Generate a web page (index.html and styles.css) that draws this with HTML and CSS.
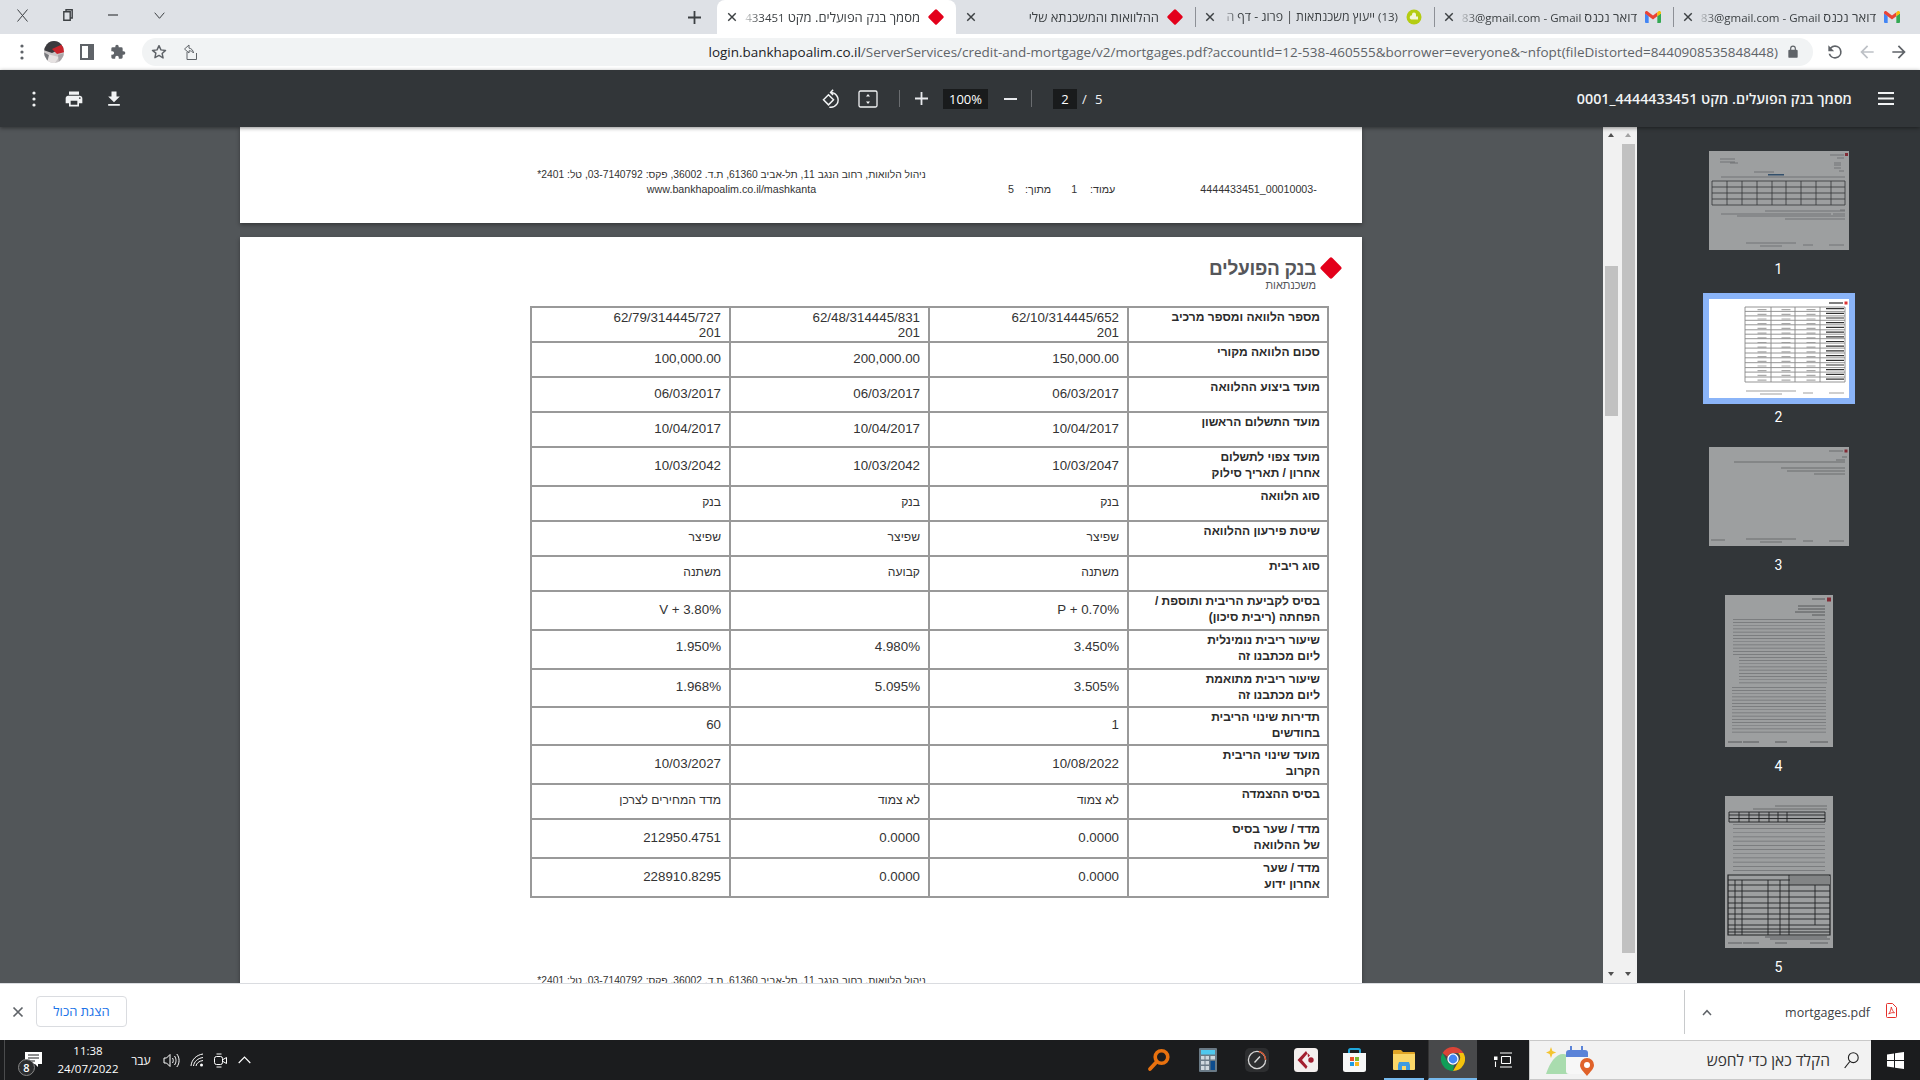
FILE: index.html
```html
<!DOCTYPE html>
<html lang="he">
<head>
<meta charset="utf-8">
<title>mortgages.pdf</title>
<link rel="stylesheet" href="styles.css">
</head>
<body>
<svg class="defs" width="0" height="0">
  <symbol id="diamond" viewBox="0 0 22 22"><path d="M9.600 1 1 9.700a1.900 1.900 0 0 0 0 2.600L9.600 21a1.900 1.900 0 0 0 2.800 0l8.600-8.700a1.900 1.900 0 0 0 0-2.600L12.400 1a1.900 1.900 0 0 0-2.800 0z" fill="#e3001b"/></symbol>
  <symbol id="gmail" viewBox="0 0 24 18">
    <path fill="#4285f4" d="M0 3.500V16.500A1.500 1.500 0 0 0 1.500 18H5.500V7.500Z"/>
    <path fill="#34a853" d="M24 3.500V16.500A1.500 1.500 0 0 1 22.500 18H18.500V7.500Z"/>
    <path fill="#ea4335" d="M5.500 7.800 0 3.700V2.500C0 .5 2.200-.7 4 .6L12 6.600 18.500 1.800V7.800L12 12.600Z"/>
    <path fill="#fbbc04" d="M18.500 7.800V1.800L20 .6C21.800-.7 24 .5 24 2.500V3.700Z"/>
  </symbol>
  <symbol id="x" viewBox="0 0 12 12"><path d="M1.500 1.500l9 9m0-9l-9 9" stroke="currentColor" stroke-width="1.700" fill="none"/></symbol>
  <symbol id="kebab" viewBox="0 0 4 16"><circle cx="2" cy="2" r="1.600" fill="currentColor"/><circle cx="2" cy="8" r="1.600" fill="currentColor"/><circle cx="2" cy="14" r="1.600" fill="currentColor"/></symbol>
</svg>

<header class="tabstrip">
  <div class="winctl">
    <span class="winbtn"><svg width="11" height="13" viewBox="0 0 11 13"><path d="M.5.500l10 12m0-12l-10 12" stroke="#3c4043" stroke-width="1" fill="none"/></svg></span>
    <span class="winbtn"><svg width="10" height="12" viewBox="0 0 10 12"><path d="M3 2.500V.8h6.200V9H7.500M.8 2.800h6.400v8.400H.8z" stroke="#3c4043" stroke-width="1.400" fill="none"/></svg></span>
    <span class="winbtn"><svg width="10" height="2" viewBox="0 0 10 2"><path d="M0 1h10" stroke="#3c4043" stroke-width="1.200"/></svg></span>
    <span class="winbtn winbtn-last"><svg width="11" height="7" viewBox="0 0 11 7"><path d="M.7.700l4.800 5.600L10.300.7" stroke="#3c4043" stroke-width="1" fill="none"/></svg></span>
  </div>
  <span class="newtab"><svg width="13" height="13" viewBox="0 0 13 13"><path d="M6.500 0v13M0 6.500h13" stroke="#3c4043" stroke-width="1.800"/></svg></span>
  <div class="tab tab-active">
    <svg class="tab-x"><use href="#x"/></svg>
    <span class="tab-title" dir="rtl"><span class="he">מסמך בנק הפועלים. מקט</span> 433451</span>
    <svg class="tab-ico"><use href="#diamond"/></svg>
  </div>
  <div class="tab">
    <svg class="tab-x"><use href="#x"/></svg>
    <span class="tab-title" dir="rtl"><span class="he">ההלוואות והמשכנתא שלי</span></span>
    <svg class="tab-ico"><use href="#diamond"/></svg>
  </div>
  <div class="tab tab-sep">
    <svg class="tab-x"><use href="#x"/></svg>
    <span class="tab-title" dir="rtl">(13) <span class="he he-tight">ייעוץ משכנתאות | פרוג - דף ה</span></span>
    <svg class="tab-ico" viewBox="0 0 16 16"><circle cx="8" cy="8" r="7.500" fill="#b4cc12"/><path d="M8 3.500a2 2 0 0 1 2 2v2h2v3H5a2.200 2.200 0 0 1 1-4.200V5.500a2 2 0 0 1 2-2z" fill="#f3f6d8"/></svg>
  </div>
  <div class="tab tab-sep">
    <svg class="tab-x"><use href="#x"/></svg>
    <span class="tab-title" dir="rtl"><span class="he">דואר נכנס</span> <bdi dir="ltr">83@gmail.com - Gmail</bdi></span>
    <svg class="tab-ico tab-gm"><use href="#gmail"/></svg>
  </div>
  <div class="tab tab-sep">
    <svg class="tab-x"><use href="#x"/></svg>
    <span class="tab-title" dir="rtl"><span class="he">דואר נכנס</span> <bdi dir="ltr">83@gmail.com - Gmail</bdi></span>
    <svg class="tab-ico tab-gm"><use href="#gmail"/></svg>
  </div>
</header>

<nav class="addrbar">
  <svg class="kebab-dark"><use href="#kebab"/></svg>
  <svg class="avatar" width="22" height="22" viewBox="0 0 22 22">
    <defs><clipPath id="avclip"><ellipse cx="11" cy="11" rx="10" ry="11"/></clipPath></defs>
    <g clip-path="url(#avclip)">
      <rect width="22" height="22" fill="#c9c5c6"/>
      <path d="M0 0h22v6L9 12 0 9z" fill="#3a3a3e"/>
      <path d="M9 8 22 2v9l-8 2z" fill="#c8242c"/>
      <path d="M4 13l12 3-4 6H3z" fill="#e6e2e2"/>
      <path d="M0 11l6 3-2 8H0z" fill="#77787c"/>
      <path d="M15 14l7-2v6l-6 4z" fill="#a9a5a8"/>
    </g>
  </svg>
  <svg class="panel-ico" width="14" height="16" viewBox="0 0 14 16"><path d="M0 0h14v16H0zM2 2v12h6V2z" fill="#5f6368" fill-rule="evenodd"/></svg>
  <svg class="puzzle-ico" width="16" height="16" viewBox="0 0 24 24"><path fill="#5f6368" d="M20.500 11H19V7a2 2 0 0 0-2-2h-4V3.500a2.500 2.500 0 0 0-5 0V5H4a2 2 0 0 0-2 2v3.800h1.500a2.700 2.700 0 0 1 0 5.400H2V20a2 2 0 0 0 2 2h3.800v-1.500a2.700 2.700 0 0 1 5.400 0V22H17a2 2 0 0 0 2-2v-4h1.500a2.500 2.500 0 0 0 0-5z"/></svg>
  <div class="omnibox">
    <svg class="star-ico" width="16" height="16" viewBox="0 0 24 24"><path d="M12 2.500l2.900 6.300 6.900.8-5.100 4.600 1.400 6.800L12 17.100 5.900 20.500l1.400-6.800L2.200 9.600l6.900-.8z" fill="none" stroke="#5f6368" stroke-width="2.200" stroke-linejoin="round"/></svg>
    <svg class="share-ico" width="16" height="17" viewBox="0 0 16 17"><path d="M7 1 2.500 5 7 9V6.800c2 0 3.500.6 4.500 2.200C11.300 6.400 9.500 4.400 7 4.100zM5 8v7.500h9.500V9" fill="none" stroke="#5f6368" stroke-width="1"/></svg>
    <div class="url"><span class="url-host">login.bankhapoalim.co.il</span>/ServerServices/credit-and-mortgage/v2/mortgages.pdf?accountId=12-538-460555&amp;borrower=everyone&amp;~nfopt(fileDistorted=8440908535848448)</div>
    <svg class="lock-ico" width="14" height="14" viewBox="0 0 24 24"><path fill="#5f6368" d="M18 8h-1V6a5 5 0 0 0-10 0v2H6a2 2 0 0 0-2 2v10a2 2 0 0 0 2 2h12a2 2 0 0 0 2-2V10a2 2 0 0 0-2-2zM9 6a3 3 0 0 1 6 0v2H9V6z"/></svg>
  </div>
  <span class="navbtn"><svg class="flip" width="20" height="20" viewBox="0 0 24 24"><path fill="#5f6368" d="M17.650 6.350A7.960 7.960 0 0 0 12 4a8 8 0 1 0 7.730 10h-2.080A6 6 0 1 1 12 6c1.660 0 3.140.69 4.220 1.780L13 11h7V4l-2.350 2.350z"/></svg></span>
  <span class="navbtn"><svg width="20" height="20" viewBox="0 0 24 24"><path fill="#bdc1c6" d="M20 11H7.830l5.590-5.590L12 4l-8 8 8 8 1.410-1.410L7.830 13H20v-2z"/></svg></span>
  <span class="navbtn"><svg class="flip" width="20" height="20" viewBox="0 0 24 24"><path fill="#5f6368" d="M20 11H7.830l5.590-5.590L12 4l-8 8 8 8 1.410-1.410L7.830 13H20v-2z"/></svg></span>
</nav>

<section class="pdfbar">
  <span class="pb pb-left"><svg class="kebab-light"><use href="#kebab"/></svg></span>
  <span class="pb pb-left"><svg width="20" height="20" viewBox="0 0 24 24"><path fill="#f1f3f4" d="M19 8H5c-1.660 0-3 1.340-3 3v6h4v4h12v-4h4v-6c0-1.660-1.340-3-3-3zm-3 11H8v-5h8v5zm3-7c-.55 0-1-.45-1-1s.45-1 1-1 1 .45 1 1-.45 1-1 1zm-1-9H6v4h12V3z"/></svg></span>
  <span class="pb pb-left"><svg width="20" height="20" viewBox="0 0 24 24"><path fill="#f1f3f4" d="M19 9h-4V3H9v6H5l7 7 7-7zM5 18v2h14v-2H5z"/></svg></span>
  <div class="pdfbar-center">
    <span class="pb pb-rot"><svg width="20" height="20" viewBox="0 0 24 24"><path d="M3 13l6-6 6 6-6 6zM12 4.200a9 9 0 0 1 7 14 9 9 0 0 1-9 3.600M14.500 1l-3 3.200 3 3" fill="none" stroke="#f1f3f4" stroke-width="1.800"/></svg></span>
    <span class="pb pb-fit"><svg width="20" height="18" viewBox="0 0 20 18"><rect x="1" y="1" width="18" height="16" rx="1.500" fill="none" stroke="#f1f3f4" stroke-width="1.300"/><path d="M10 4l2 2.500H8zM10 14l2-2.500H8z" fill="#f1f3f4"/></svg></span>
    <span class="pdf-sep pdf-sep-first"></span>
    <span class="pb pb-plus"><svg width="13" height="13" viewBox="0 0 13 13"><path d="M6.500 0v13M0 6.500h13" stroke="#e8eaed" stroke-width="1.800"/></svg></span>
    <span class="zoombox">100%</span>
    <span class="pb pb-minus"><svg width="13" height="2" viewBox="0 0 13 2"><path d="M0 1h13" stroke="#e8eaed" stroke-width="2"/></svg></span>
    <span class="pdf-sep"></span>
    <span class="pagebox">2</span>
    <span class="pg-slash">/</span>
    <span class="pg-total">5</span>
  </div>
  <div class="pdf-title" dir="rtl">מסמך בנק הפועלים. מקט 4444433451_0001</div>
  <span class="pb pb-menu"><svg width="16" height="13" viewBox="0 0 16 13"><path d="M0 1h16M0 6.500h16M0 12h16" stroke="#f1f3f4" stroke-width="1.800"/></svg></span>
</section>

<main class="workspace">
  <div class="viewer">
    <article class="page page-one">
      <div class="foot">
        <div class="foot-left">
          <div class="foot-he" dir="rtl">ניהול הלוואות, רחוב הנגב 11, תל-אביב 61360, ת.ד. 36002, פקס: 03-7140792, טל: 2401*</div>
          <div>www.bankhapoalim.co.il/mashkanta</div>
        </div>
        <div class="foot-pages"><span>5</span><span class="fp-a" dir="rtl">מתוך:</span><span class="fp-b">1</span><span class="fp-c" dir="rtl">עמוד:</span></div>
        <div class="foot-id">4444433451_00010003-</div>
      </div>
    </article>
    <article class="page page-two">
      <div class="logo">
        <div class="logo-text" dir="rtl">
          <div class="logo-name">בנק הפועלים</div>
          <div class="logo-sub">משכנתאות</div>
        </div>
        <svg class="logo-mark"><use href="#diamond"/></svg>
      </div>
      <table class="loans" dir="rtl">
        <colgroup><col class="c-label"><col class="c-val"><col class="c-val"><col class="c-val"></colgroup>
        <tr class="h35"><th>מספר הלוואה ומספר מרכיב</th><td class="code">62/10/314445/652<br>201</td><td class="code">62/48/314445/831<br>201</td><td class="code">62/79/314445/727<br>201</td></tr>
        <tr class="h35"><th>סכום הלוואה מקורי</th><td>150,000.00</td><td>200,000.00</td><td>100,000.00</td></tr>
        <tr class="h35"><th>מועד ביצוע ההלוואה</th><td>06/03/2017</td><td>06/03/2017</td><td>06/03/2017</td></tr>
        <tr class="h35"><th>מועד התשלום הראשון</th><td>10/04/2017</td><td>10/04/2017</td><td>10/04/2017</td></tr>
        <tr class="h39"><th>מועד צפוי לתשלום<br>אחרון / תאריך סילוק</th><td>10/03/2047</td><td>10/03/2042</td><td>10/03/2042</td></tr>
        <tr class="h35"><th>סוג הלוואה</th><td class="he-cell">בנק</td><td class="he-cell">בנק</td><td class="he-cell">בנק</td></tr>
        <tr class="h35"><th>שיטת פירעון ההלוואה</th><td class="he-cell">שפיצר</td><td class="he-cell">שפיצר</td><td class="he-cell">שפיצר</td></tr>
        <tr class="h35"><th>סוג ריבית</th><td class="he-cell">משתנה</td><td class="he-cell">קבועה</td><td class="he-cell">משתנה</td></tr>
        <tr class="h39"><th>בסיס לקביעת הריבית ותוספת /<br>הפחתה (ריבית סיכון)</th><td>P + 0.70%</td><td></td><td>V + 3.80%</td></tr>
        <tr class="h39"><th>שיעור ריבית נומינלית<br>ליום מכתבנו זה</th><td class="raise">3.450%</td><td class="raise">4.980%</td><td class="raise">1.950%</td></tr>
        <tr class="h38"><th>שיעור ריבית מתואמת<br>ליום מכתבנו זה</th><td>3.505%</td><td>5.095%</td><td>1.968%</td></tr>
        <tr class="h38"><th>תדירות שינוי הריבית<br>בחודשים</th><td>1</td><td></td><td>60</td></tr>
        <tr class="h39"><th>מועד שינוי הריבית<br>הקרוב</th><td>10/08/2022</td><td></td><td>10/03/2027</td></tr>
        <tr class="h35"><th>בסיס ההצמדה</th><td class="he-cell">לא צמוד</td><td class="he-cell">לא צמוד</td><td class="he-cell">מדד המחירים לצרכן</td></tr>
        <tr class="h39"><th>מדד / שער בסיס<br>של ההלוואה</th><td>0.0000</td><td>0.0000</td><td>212950.4751</td></tr>
        <tr class="h39"><th>מדד / שער<br>אחרון ידוע</th><td>0.0000</td><td>0.0000</td><td>228910.8295</td></tr>
      </table>
      <div class="foot foot-two">
        <div class="foot-left">
          <div class="foot-he" dir="rtl">ניהול הלוואות, רחוב הנגב 11, תל-אביב 61360, ת.ד. 36002, פקס: 03-7140792, טל: 2401*</div>
        </div>
      </div>
    </article>
  </div>

  <div class="scrollbars">
    <div class="track track-a">
      <span class="arrow arrow-up"></span>
      <span class="thumb thumb-a"></span>
      <span class="arrow arrow-down arrow-end"></span>
    </div>
    <div class="track track-b">
      <span class="arrow arrow-up arrow-dim"></span>
      <span class="thumb thumb-b"></span>
      <span class="arrow arrow-down arrow-end"></span>
    </div>
  </div>

  <aside class="sidebar">
    <div class="th">
      <div class="th-frame">
        <svg class="th-img th-dim" width="140" height="99" viewBox="0 0 140 99">
          <rect width="140" height="99" fill="#fff"/>
          <g stroke="#333" fill="none" stroke-width=".8"><path d="M3 30h133v24H3zM3 36h133M3 42h133M3 48h133M18 30v24M33 30v24M48 30v24M63 30v24M77 30v24M92 30v24M107 30v24M122 30v24"/></g>
          <path d="M121 4h14M128 7h7M125 12h7M125 14h7M125 17h7M130 20h5M11 8h15M11 11h15M21 12h8M45 21h20M12 26h124M131 59h5M56 60h80M124 63h12M12 63h110M28 65h108M76 68h60M37 92h50M94 94h10M120 94h15M51 95h22" stroke="#777" stroke-width=".6"/>
          <rect x="59" y="23" width="16" height="1.500" fill="#369"/>
          <rect x="136" y="2" width="3" height="3" fill="#c23"/>
        </svg>
      </div>
      <div class="th-label">1</div>
    </div>
    <div class="th th-selected">
      <div class="th-frame">
        <svg class="th-img" width="140" height="99" viewBox="0 0 140 99">
          <rect width="140" height="99" fill="#fff"/>
          <path d="M120 4h14" stroke="#555" stroke-width="1.500"/>
          <rect x="135.500" y="2.500" width="3" height="3" fill="#d33"/>
          <path d="M53 8v75M77 8v75M102 8v75" stroke="#aaa" stroke-width="9" stroke-dasharray="1.200 3.500" stroke-dashoffset="-2"/>
          <path d="M126 8v75" stroke="#333" stroke-width="18" stroke-dasharray="1.200 3.500" stroke-dashoffset="-1"/>
          <path d="M36 8h100v75H36zM36 12.400h100M36 16.900h100M36 21.300h100M36 25.800h100M36 30.800h100M36 35.200h100M36 39.700h100M36 44.100h100M36 49.100h100M36 54h100M36 58.800h100M36 63.700h100M36 68.600h100M36 73.100h100M36 78h100M62 8v75M86 8v75M111 8v75" fill="none" stroke="#888" stroke-width=".9"/>
          <path d="M37 92h50M94 94h10M120 94h15M51 95h22" stroke="#777" stroke-width=".7"/>
        </svg>
      </div>
      <div class="th-label">2</div>
    </div>
    <div class="th">
      <div class="th-frame">
        <svg class="th-img th-dim" width="140" height="99" viewBox="0 0 140 99">
          <rect width="140" height="99" fill="#fff"/>
          <path d="M120 4h14M133 10h5M127 13h9M25 15h111M72 21h64M78 24h58M105 27h31M2 93h14M37 92h50M94 94h10M120 94h15M51 95h22" stroke="#777" stroke-width=".7"/>
          <rect x="135.500" y="2.500" width="3" height="3" fill="#c23"/>
        </svg>
      </div>
      <div class="th-label">3</div>
    </div>
    <div class="th">
      <div class="th-frame">
        <svg class="th-img th-dim" width="108" height="152" viewBox="0 0 108 152">
          <rect width="108" height="152" fill="#fff"/>
          <path d="M87 4h13M73 11h27M73 14h27M70 17h30M87 20h13" stroke="#555" stroke-width=".8"/>
          <rect x="102" y="2.500" width="4" height="4" fill="#c23"/>
          <path d="M54 24V60" stroke="#aaa" stroke-width="92" stroke-dasharray=".7 2.500"/>
          <path d="M58 62V90" stroke="#aaa" stroke-width="88" stroke-dasharray=".7 2.500"/>
          <path d="M54 92V140" stroke="#aaa" stroke-width="94" stroke-dasharray=".7 2.500"/>
          <path d="M3 147h14M18 147h16M50 147h12M85 147h18" stroke="#555" stroke-width=".8"/>
        </svg>
      </div>
      <div class="th-label">4</div>
    </div>
    <div class="th">
      <div class="th-frame">
        <svg class="th-img th-dim" width="108" height="152" viewBox="0 0 108 152">
          <rect width="108" height="152" fill="#fff"/>
          <path d="M50 10h52M28 13h74" stroke="#777" stroke-width=".7"/>
          <path d="M4 16h96v10H4zM4 19h96M4 22.500h96M14 16v10M24 16v10M34 16v10M44 16v10M53 16v10M62 16v10" fill="none" stroke="#111" stroke-width=".9"/>
          <path d="M54 28V77" stroke="#aaa" stroke-width="92" stroke-dasharray=".7 3.500"/>
          <path d="M3 79h102v60H3z" fill="none" stroke="#111" stroke-width="1.200"/>
          <rect x="65" y="80" width="40" height="9" fill="#ccc"/>
          <path d="M3 84h62M3 89h102M3 95h102M3 101h102M3 107h102M3 112h102M3 118h102M3 123h102M3 129h102M3 133h102M3 136h102M10 84v55M17 84v55M43 84v55M55 84v55M64 79v60M90 89v40" fill="none" stroke="#111" stroke-width=".9"/>
          <path d="M40 141h62M45 143h60M3 147h14M18 147h16M50 147h12M85 147h18" stroke="#555" stroke-width=".7"/>
        </svg>
      </div>
      <div class="th-label">5</div>
    </div>
  </aside>
</main>

<section class="downloads">
  <span class="dl-close"><svg width="12" height="12"><use href="#x"/></svg></span>
  <button class="dl-all" dir="rtl">הצגת הכול</button>
  <div class="dl-item">
    <span class="dl-chev"><svg width="10" height="7" viewBox="0 0 10 7"><path d="M1 6l4-4.300L9 6" stroke="#5f6368" stroke-width="1.500" fill="none"/></svg></span>
    <span class="dl-name">mortgages.pdf</span>
    <svg class="dl-pdf" width="11" height="15" viewBox="0 0 11 15"><path d="M1.500.5h5l4 4v9a1 1 0 0 1-1 1h-8a1 1 0 0 1-1-1v-12a1 1 0 0 1 1-1z" fill="#fff" stroke="#e5302a"/><path d="M5.300 4c.6 2.500 1.500 4.300 3.200 5.800-2-.4-4.200 0-5.800 1.200 1.400-1.800 2.400-4.400 2.600-7z" fill="none" stroke="#e5302a" stroke-width=".9"/></svg>
  </div>
</section>

<footer class="taskbar">
  <div class="tray">
    <span class="tray-edge"></span>
    <span class="notif">
      <svg width="17" height="15" viewBox="0 0 17 15"><path d="M0 0h17v12h-4v3l-3-3H0z" fill="#fff"/><path d="M3 3h11M3 6h11M3 9h7" stroke="#1b1c1e" stroke-width="1"/></svg>
      <span class="notif-badge">8</span>
    </span>
    <span class="clock"><span>11:38</span><span>24/07/2022</span></span>
    <span class="lang" dir="rtl">עבר</span>
    <svg class="tr-vol" width="17" height="15" viewBox="0 0 17 15"><path d="M1 5h2.500L7 1.500v12L3.500 10H1zM9.500 5c1 1.500 1 3.500 0 5M11.500 3c2 2.700 2 6.300 0 9M13.800 1c3 3.800 3 9.200 0 13" fill="none" stroke="#fff" stroke-width="1"/></svg>
    <svg class="tr-wifi" width="14" height="14" viewBox="0 0 14 14"><path d="M1 13C1.500 7 6 2 13 1M3.500 13c.5-4.200 4-7.700 9.500-8.500M6 13c.4-2.700 3-5 7-5.500" fill="none" stroke="#fff" stroke-width="1"/><circle cx="11.500" cy="12" r="1.500" fill="#fff"/></svg>
    <svg class="tr-meet" width="13" height="15" viewBox="0 0 13 15"><path d="M2.500 1h5M2.500 14h5" stroke="#fff" stroke-width="1"/><rect x=".5" y="3.500" width="8" height="8" rx="2" fill="none" stroke="#fff"/><path d="M9 6.500l3.500-2v6L9 8.500" fill="none" stroke="#fff"/></svg>
    <svg class="tr-chev" width="13" height="8" viewBox="0 0 13 8"><path d="M.7 7l5.800-6 5.800 6" fill="none" stroke="#fff" stroke-width="1.100"/></svg>
  </div>
  <div class="apps">
    <span class="app"><svg width="24" height="24" viewBox="0 0 24 24"><circle cx="14.500" cy="9" r="6.300" fill="none" stroke="#e8710f" stroke-width="3.600"/><path d="M9.500 14L3 21" stroke="#e8710f" stroke-width="3.800" stroke-linecap="round"/></svg></span>
    <span class="app"><svg width="18" height="24" viewBox="0 0 18 24"><rect width="18" height="24" rx="1" fill="#6a7a86"/><rect x="2" y="2" width="14" height="4.500" fill="#4fc8ee"/><path d="M2 8h3.500v3.500H2zM6.500 8H10v3.500H6.500zM2 13h3.500v3.500H2zM6.500 13H10v3.500H6.500zM2 18h3.500v4H2zM6.500 18H10v4H6.500z" fill="#cfd8de"/><rect x="11.500" y="8" width="4.500" height="3.500" fill="#cfd8de"/><rect x="11.500" y="13" width="4.500" height="9" fill="#0d4c8e"/></svg></span>
    <span class="app"><svg width="24" height="24" viewBox="0 0 24 24"><rect width="24" height="24" rx="5" fill="#2d2e30"/><circle cx="12" cy="12" r="8.600" fill="none" stroke="#d5d5d5" stroke-width="1.300"/><path d="M14 3.600A8.600 8.600 0 0 1 20.600 12" fill="none" stroke="#d4512a" stroke-width="1.500"/><path d="M9.500 14.500L15 8.500" stroke="#ddd" stroke-width="1.400"/></svg></span>
    <span class="app"><svg width="24" height="24" viewBox="0 0 24 24"><rect width="24" height="24" rx="3.500" fill="#f4efee"/><path d="M12 3 3.500 12 12 21l1.500-2.500L8 12l5.500-6.500z" fill="#a31f2f"/><circle cx="17" cy="12" r="2.700" fill="#a31f2f"/><path d="M13.500 5l2.500 2.500-2 2z" fill="#a31f2f"/></svg></span>
    <span class="app"><svg width="23" height="24" viewBox="0 0 23 24"><path d="M6 7V2.500A1.500 1.500 0 0 1 7.500 1h8A1.500 1.500 0 0 1 17 2.500V7" fill="none" stroke="#1fa7dc" stroke-width="2"/><path d="M0 5h23v16.500a2.500 2.500 0 0 1-2.500 2.500h-18A2.500 2.500 0 0 1 0 21.500z" fill="#f7f7f7"/><rect x="7" y="9" width="4" height="4" fill="#e8502a"/><rect x="12" y="9" width="4" height="4" fill="#7cb82f"/><rect x="7" y="14" width="4" height="4" fill="#1e9be2"/><rect x="12" y="14" width="4" height="4" fill="#f8b71c"/></svg></span>
    <span class="app app-open"><svg width="22" height="20" viewBox="0 0 22 20"><path d="M0 1a1 1 0 0 1 1-1h7l2 2h11a1 1 0 0 1 1 1v3H0z" fill="#e0a526"/><path d="M0 4h22v15a1 1 0 0 1-1 1H1a1 1 0 0 1-1-1z" fill="#fbd768"/><path d="M5 20v-5l1-3h10l1 3v5h-4v-4H9v4z" fill="#3f9be0"/></svg></span>
    <span class="app app-active"><svg width="24" height="24" viewBox="0 0 24 24"><path d="M1.600 6A12 12 0 0 1 22.400 6H12a6 6 0 0 0-5.600 3.800z" fill="#db4437"/><path d="M22.400 6A12 12 0 0 1 12 24l5.200-9a6 6 0 0 0 0-9z" fill="#f4c20d"/><path d="M12 24A12 12 0 0 1 1.600 6l5.200 9a6 6 0 0 0 6.200 3z" fill="#0f9d58"/><circle cx="12" cy="12" r="5.700" fill="#fff"/><circle cx="12" cy="12" r="4.400" fill="#4285f4"/></svg></span>
    <span class="app-view"><svg width="18" height="16" viewBox="0 0 18 16"><rect x="0" y="4.500" width="3.500" height="3.500" fill="#fff"/><path d="M1.500 9.500V15M6 1h12M6 15h12M7.500 4.500h9M7.500 11.500h9M7.500 4.500v7M16.500 4.500v7" fill="none" stroke="#fff" stroke-width="1.100"/></svg></span>
  </div>
  <div class="searchbox">
    <svg class="search-art" width="48" height="32" viewBox="0 0 48 32">
      <path d="M0 30C4 18 10 10 17 10c6 0 10 6 13 20z" fill="#a9dcae"/>
      <path d="M5 3l1.400 4 3.800 1.400-3.800 1.500L5 14 3.600 9.900 0 8.400l3.600-1.400z" fill="#f4c430"/>
      <rect x="20" y="6" width="22" height="24" rx="3" fill="#f7f7f7"/>
      <path d="M20 9a3 3 0 0 1 3-3h16a3 3 0 0 1 3 3v4H20z" fill="#5a83d8"/>
      <path d="M25 2v6M36 2v6" stroke="#5a83d8" stroke-width="2"/>
      <path d="M41 14a7 7 0 0 1 7 7c0 4-4 7-7 11-3-4-7-7-7-11a7 7 0 0 1 7-7z" fill="#e0622a"/>
      <circle cx="41" cy="21" r="3" fill="#fff"/>
    </svg>
    <span class="search-text" dir="rtl">הקלד כאן כדי לחפש</span>
    <svg class="search-glass" width="15" height="17" viewBox="0 0 15 17"><circle cx="9.300" cy="5.700" r="4.900" fill="none" stroke="#222" stroke-width="1.100"/><path d="M5.800 9.500L.7 16" stroke="#222" stroke-width="1.200"/></svg>
  </div>
  <span class="winlogo"><svg width="17" height="17" viewBox="0 0 17 17"><path d="M0 2.400 7 1.400V8H0zM8 1.300 17 0V8H8zM0 9h7v6.600L0 14.600zM8 9h9v8L8 15.700z" fill="#fff"/></svg></span>
</footer>
</body>
</html>
```

FILE: styles.css
```css
* { box-sizing: border-box; }
html, body { margin: 0; height: 100%; }
body {
  width: 1920px; height: 1080px; overflow: hidden;
  display: flex; flex-direction: column;
  font-family: "Open Sans", "Liberation Sans", sans-serif;
  background: #fff;
}
.defs { position: absolute; }
svg { display: block; flex: none; }
.flip { transform: scaleX(-1); }

/* tab strip */
.tabstrip { height: 34px; flex: none; display: flex; background: #dee1e6; }
.winctl { display: flex; }
.winbtn { width: 45px; display: flex; align-items: center; justify-content: center; padding-bottom: 4px; }
.winbtn-last { padding-left: 4px; }
.newtab { margin-left: 502px; width: 24px; display: flex; align-items: center; justify-content: center; }
.tab {
  width: 239px; display: flex; align-items: center; padding: 0 12px 0 10px;
  position: relative; color: #3c4043;
}
.newtab + .tab { margin-left: 11px; }
.tab-active { background: #fff; border-radius: 8px 8px 0 0; }
.tab-sep::before { content: ""; position: absolute; left: 0; top: 7px; bottom: 7px; width: 1px; background: #8d9096; }
.tab-x { width: 10px; height: 10px; color: #3c4043; }
.tab-title {
  flex: 1; min-width: 0; margin: 0 8px 0 5px; white-space: nowrap; overflow: hidden;
  font-size: 11.5px; line-height: 16px; text-align: right;
  -webkit-mask-image: linear-gradient(to right, transparent, #000 18px);
  mask-image: linear-gradient(to right, transparent, #000 18px);
}
.he { font-size: 13px; }
.he-tight { font-size: 12.3px; }
.tab-ico { width: 16px; height: 16px; }
.tab-gm { height: 12px; }

/* address bar */
.addrbar { height: 36px; flex: none; display: flex; align-items: center; background: #fff; }
.kebab-dark { width: 4px; height: 16px; color: #5f6368; margin-left: 20px; }
.avatar { margin-left: 19px; }
.panel-ico { margin-left: 15px; }
.puzzle-ico { margin-left: 16px; }
.omnibox {
  margin-left: 16px; width: 1671px; height: 28px; border-radius: 14px;
  background: #f1f3f4; display: flex; align-items: center; padding: 0 13px 0 9px;
}
.share-ico { margin-left: 15px; }
.url {
  margin-left: auto; white-space: nowrap; color: #5f6368;
  font-size: 13.47px; line-height: 18px;
}
.url-host { color: #202124; }
.lock-ico { margin-left: 8px; }
.navbtn { width: 32px; display: flex; justify-content: center; }
.navbtn:first-of-type { margin-left: 6px; }

/* PDF toolbar */
.pdfbar {
  height: 57px; flex: none; display: flex; align-items: center; background: #323639;
  color: #f1f3f4; position: relative; z-index: 2; box-shadow: 0 1px 4px rgba(0,0,0,.45);
}
.pb { display: flex; align-items: center; justify-content: center; height: 32px; }
.pb-left { width: 40px; }
.pb-left:first-child { margin-left: 14px; }
.kebab-light { width: 4px; height: 16px; color: #f1f3f4; }
.pdfbar-center { margin-left: 679px; display: flex; align-items: center; font-size: 13px; }
.pb-rot { width: 36px; }
.pb-fit { width: 38px; }
.pdf-sep { width: 1px; height: 17px; background: #6a6d70; }
.pdf-sep-first { margin-left: 12px; }
.pb-plus { width: 38px; margin-left: 2px; }
.zoombox, .pagebox {
  height: 20px; background: #191b1c; color: #fff; display: flex; align-items: center;
  justify-content: center; font-size: 13px;
}
.zoombox { width: 45px; margin-left: 3px; }
.pagebox { width: 24px; margin-left: 21px; }
.pb-minus { width: 43px; padding-left: 2px; }
.pg-slash { margin-left: 5px; width: 6px; }
.pg-total { margin-left: 7px; font-size: 13px; }
.pdf-title { margin-left: auto; font-size: 14.3px; font-weight: 600; white-space: nowrap; color: #f1f3f4; }
.pb-menu { width: 40px; margin: 0 14px; }

/* workspace */
.workspace { height: 856px; flex: none; display: flex; }
.viewer {
  width: 1603px; flex: none; background: #525659; padding-left: 240px; overflow: hidden;
  font-family: "Liberation Sans", Arial, sans-serif; color: #333;
}
.page { width: 1122px; background: #fff; box-shadow: 0 2px 4px rgba(0,0,0,.35); }
.page-one { height: 96px; padding-top: 40px; }
.page-two { height: 800px; margin-top: 14px; padding-top: 20px; overflow: hidden; }

.foot { display: flex; font-size: 10.7px; line-height: 15px; padding-left: 297px; }
.foot-left { width: 389px; text-align: center; white-space: nowrap; }
.foot-he { font-size: 10.3px; }
.foot-pages { display: flex; margin-left: 82px; padding-top: 15px; height: 30px; }
.fp-a { margin-left: 11px; }
.fp-b { margin-left: 20px; }
.fp-c { margin-left: 13px; }
.foot-id { margin-left: 85px; padding-top: 15px; white-space: nowrap; }
.foot-two { margin-top: 75px; }

.logo { display: flex; justify-content: flex-end; padding: 0 20px 0 0; height: 49px; }
.logo-text { margin-right: 4px; padding-top: 2px; text-align: right; color: #55565a; }
.logo-name { font-size: 19px; line-height: 20px; font-weight: bold; letter-spacing: -.3px; }
.logo-sub { font-size: 11px; line-height: 14px; margin-top: -1px; }
.logo-mark { width: 22px; height: 22px; }

.loans {
  margin-left: 290px; width: 797px; table-layout: fixed; border-collapse: collapse;
  font-size: 13.33px; line-height: 15.5px; color: #333;
}
.c-label { width: 200px; }
.c-val { width: 199px; }
.loans th, .loans td { border: 2px solid #999; padding: 0 8px 2px; text-align: right; }
.loans th { font-size: 12px; font-weight: bold; vertical-align: top; padding: 2px 7px 0; white-space: nowrap; color: #2b2b2b; }
.loans td { vertical-align: middle; }
.loans td.he-cell { font-size: 12.1px; }
.loans td.raise { padding-bottom: 6px; }
.loans td.code { vertical-align: top; padding: 2px 8px 0; line-height: 15px; }
.h35 > * { height: 35px; }
.h38 > * { height: 38px; }
.h39 > * { height: 39px; }

/* scrollbars */
.scrollbars { width: 34px; flex: none; display: flex; background: #f1f1f1; }
.track { display: flex; flex-direction: column; align-items: flex-start; height: 100%; }
.track-a { width: 19px; padding-left: 2px; }
.track-b { width: 15px; }
.arrow { width: 13px; height: 17px; flex: none; position: relative; }
.arrow::after {
  content: ""; position: absolute; left: 3px; top: 6px;
  border-left: 3.5px solid transparent; border-right: 3.5px solid transparent;
}
.arrow-up::after { border-bottom: 4px solid #505050; }
.arrow-down::after { border-top: 4px solid #505050; }
.arrow-dim::after { border-bottom-color: #a3a3a3; }
.arrow-end { margin-top: auto; }
.thumb { width: 13px; background: #c1c1c1; display: block; }
.thumb-a { margin-top: 122px; height: 150px; }
.thumb-b { height: 809px; }

/* thumbnails */
.sidebar {
  flex: 1; background: #323639; display: flex; flex-direction: column;
  align-items: center; padding-top: 18px; overflow: hidden;
}
.th { margin-bottom: 14px; display: flex; flex-direction: column; align-items: center; }
.th-frame { border: 6px solid transparent; }
.th-selected .th-frame { border-color: #8ab4f8; }
.th-img { filter: blur(.35px); }
.th-dim { opacity: .52; }
.th-label {
  height: 20px; margin-top: 3px; color: #fff; font-family: Roboto, sans-serif;
  font-size: 14px; line-height: 20px;
}

/* downloads bar */
.downloads {
  height: 57px; flex: none; display: flex; align-items: center; background: #fff;
  border-top: 1px solid #dadce0;
}
.dl-close { width: 35px; display: flex; justify-content: center; color: #5f6368; }
.dl-all {
  margin: 0 0 2px 1px; width: 91px; height: 31px; background: #fff; border: 1px solid #dadce0;
  border-radius: 4px; color: #1a73e8; font: 500 13px "Open Sans", sans-serif; padding: 0;
}
.dl-item {
  margin-left: auto; width: 236px; height: 44px; display: flex; align-items: center;
  border-left: 1px solid #c8cacc; padding-right: 23px;
}
.dl-chev { margin-left: 17px; }
.dl-name { margin-left: auto; font-size: 12.5px; color: #3c4043; }
.dl-pdf { margin-left: 16px; margin-bottom: 3px; }

/* taskbar */
.taskbar { height: 40px; flex: none; display: flex; background: #1b1c1e; color: #fff; }
.tray { display: flex; align-items: center; width: 260px; }
.tray-edge { width: 1px; height: 40px; background: #4a4b4d; margin-left: 4px; }
.notif { width: 56px; height: 40px; position: relative; padding: 12px 0 0 20px; }
.notif-badge {
  position: absolute; left: 13px; top: 19px; width: 17px; height: 17px; border-radius: 50%;
  background: #2c2d2f; border: 1px solid #888; display: flex; align-items: center;
  justify-content: center; font-size: 11px; font-weight: 600; color: #fff;
}
.clock {
  width: 54px; display: flex; flex-direction: column; align-items: center;
  font-size: 11.5px; line-height: 18px; white-space: nowrap; flex: none;
}
.lang { width: 40px; margin-left: 6px; text-align: center; font-size: 12px; }
.tr-vol { margin-left: 2px; }
.tr-wifi { margin-left: 10px; }
.tr-meet { margin-left: 10px; }
.tr-chev { margin-left: 11px; }
.apps { margin-left: 874px; display: flex; }
.app { width: 49px; height: 40px; display: flex; align-items: center; justify-content: center; }
.app-open { background: linear-gradient(#76b9ed, #76b9ed) no-repeat center bottom / 40px 2px; }
.app-active { background: #48494b; border-bottom: 2px solid #76b9ed; border-left: 1px solid #333; }
.app-view { width: 52px; height: 40px; display: flex; align-items: center; justify-content: center; }
.searchbox {
  width: 342px; height: 40px; background: #f2f2f2; display: flex; align-items: center;
  padding: 0 12px 0 16px; border: 1px solid #c9c9c9; border-width: 1px 0 1px 1px;
}
.search-text { margin-left: auto; font-size: 15.5px; color: #333; }
.search-glass { margin-left: 14px; }
.winlogo { flex: 1; display: flex; align-items: center; justify-content: center; }
```
